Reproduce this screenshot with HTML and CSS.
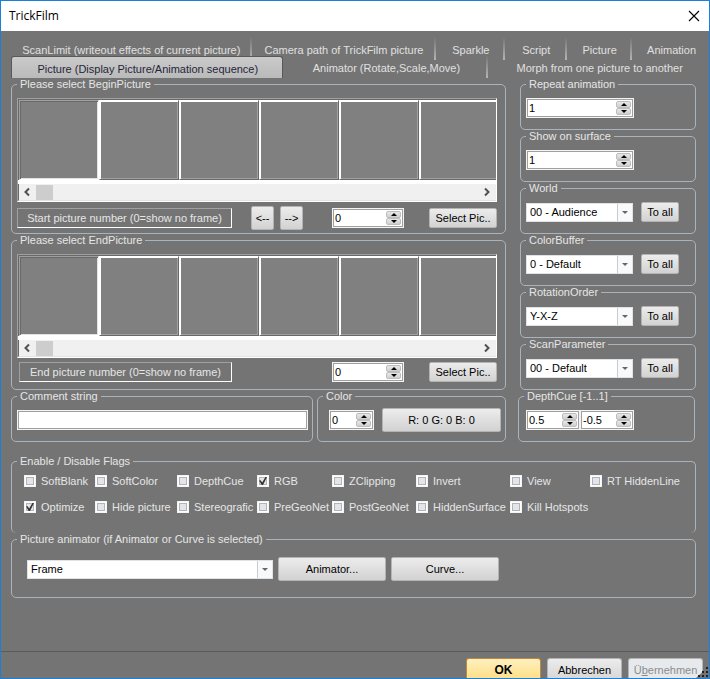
FILE: index.html
```html
<!DOCTYPE html>
<html lang="en">
<head>
    <meta charset="UTF-8">
    <meta name="viewport" content="width=device-width, initial-scale=1.0">
    <title>TrickFilm</title>
    <link rel="stylesheet" href="styles.css">
</head>
<body>
    <div class="window">
        <header class="titlebar">
            <h1>TrickFilm</h1>
            <button class="close" type="button" aria-label="Close">
                <svg width="12" height="12" viewBox="0 0 12 12"><path d="M1 1L11 11M11 1L1 11" stroke="#000" stroke-width="1.1" fill="none"/></svg>
            </button>
        </header>

        <nav class="tabs">
            <div class="tab-row tab-row-back">
                <button class="tab" type="button">ScanLimit (writeout effects of current picture)</button>
                <button class="tab" type="button">Camera path of TrickFilm picture</button>
                <button class="tab" type="button">Sparkle</button>
                <button class="tab" type="button">Script</button>
                <button class="tab" type="button">Picture</button>
                <button class="tab" type="button">Animation</button>
            </div>
            <div class="tab-row tab-row-front">
                <button class="tab active" type="button">Picture (Display Picture/Animation sequence)</button>
                <button class="tab" type="button">Animator (Rotate,Scale,Move)</button>
                <button class="tab" type="button">Morph from one picture to another</button>
            </div>
        </nav>

        <main class="content">
            <div class="columns">
                <div class="left">
                    <fieldset class="picture-group">
                        <legend>Please select BeginPicture</legend>
                        <div class="film">
                            <div class="frames">
                                <div class="frame selected"></div>
                                <div class="frame"></div>
                                <div class="frame"></div>
                                <div class="frame"></div>
                                <div class="frame"></div>
                                <div class="frame"></div>
                            </div>
                            <div class="scrollbar">
                                <svg width="8" height="10" viewBox="0 0 8 10"><path d="M6 1.5L2.5 5L6 8.5" stroke="#505050" stroke-width="2" fill="none"/></svg>
                                <div class="thumb"></div>
                                <svg width="8" height="10" viewBox="0 0 8 10"><path d="M2 1.5L5.5 5L2 8.5" stroke="#505050" stroke-width="2" fill="none"/></svg>
                            </div>
                        </div>
                        <div class="picture-row">
                            <label class="number-label" for="startNumber">Start picture number (0=show no frame)</label>
                            <div class="step-buttons">
                                <button class="btn arrow" type="button">&lt;--</button>
                                <button class="btn arrow" type="button">--&gt;</button>
                            </div>
                            <div class="spin spin-picture">
                                <input id="startNumber" type="text" value="0">
                                <div class="spin-buttons"><button type="button" class="up" aria-label="Up"></button><button type="button" class="down" aria-label="Down"></button></div>
                            </div>
                            <button class="btn select-pic" type="button">Select Pic..</button>
                        </div>
                    </fieldset>

                    <fieldset class="picture-group end">
                        <legend>Please select EndPicture</legend>
                        <div class="film">
                            <div class="frames">
                                <div class="frame selected"></div>
                                <div class="frame"></div>
                                <div class="frame"></div>
                                <div class="frame"></div>
                                <div class="frame"></div>
                                <div class="frame"></div>
                            </div>
                            <div class="scrollbar">
                                <svg width="8" height="10" viewBox="0 0 8 10"><path d="M6 1.5L2.5 5L6 8.5" stroke="#505050" stroke-width="2" fill="none"/></svg>
                                <div class="thumb"></div>
                                <svg width="8" height="10" viewBox="0 0 8 10"><path d="M2 1.5L5.5 5L2 8.5" stroke="#505050" stroke-width="2" fill="none"/></svg>
                            </div>
                        </div>
                        <div class="picture-row">
                            <label class="number-label" for="endNumber">End picture number (0=show no frame)</label>
                            <div class="step-buttons"></div>
                            <div class="spin spin-picture">
                                <input id="endNumber" type="text" value="0">
                                <div class="spin-buttons"><button type="button" class="up" aria-label="Up"></button><button type="button" class="down" aria-label="Down"></button></div>
                            </div>
                            <button class="btn select-pic" type="button">Select Pic..</button>
                        </div>
                    </fieldset>

                    <div class="comment-row">
                        <fieldset class="comment-group">
                            <legend>Comment string</legend>
                            <input class="textbox" type="text" aria-label="Comment string">
                        </fieldset>
                        <fieldset class="color-group">
                            <legend>Color</legend>
                            <div class="row">
                                <div class="spin spin-color">
                                    <input type="text" value="0" aria-label="Color">
                                    <div class="spin-buttons"><button type="button" class="up" aria-label="Up"></button><button type="button" class="down" aria-label="Down"></button></div>
                                </div>
                                <button class="btn rgb" type="button">R: 0 G: 0 B: 0</button>
                            </div>
                        </fieldset>
                    </div>
                </div>

                <div class="right">
                    <fieldset>
                        <legend>Repeat animation</legend>
                        <div class="spin spin-wide">
                            <input type="text" value="1" aria-label="Repeat animation">
                            <div class="spin-buttons"><button type="button" class="up" aria-label="Up"></button><button type="button" class="down" aria-label="Down"></button></div>
                        </div>
                    </fieldset>
                    <fieldset>
                        <legend>Show on surface</legend>
                        <div class="spin spin-wide">
                            <input type="text" value="1" aria-label="Show on surface">
                            <div class="spin-buttons"><button type="button" class="up" aria-label="Up"></button><button type="button" class="down" aria-label="Down"></button></div>
                        </div>
                    </fieldset>
                    <fieldset>
                        <legend>World</legend>
                        <div class="row">
                            <div class="combo"><select aria-label="World"><option>00 - Audience</option></select></div>
                            <button class="btn to-all" type="button">To all</button>
                        </div>
                    </fieldset>
                    <fieldset>
                        <legend>ColorBuffer</legend>
                        <div class="row">
                            <div class="combo"><select aria-label="ColorBuffer"><option>0 - Default</option></select></div>
                            <button class="btn to-all" type="button">To all</button>
                        </div>
                    </fieldset>
                    <fieldset>
                        <legend>RotationOrder</legend>
                        <div class="row">
                            <div class="combo"><select aria-label="RotationOrder"><option>Y-X-Z</option></select></div>
                            <button class="btn to-all" type="button">To all</button>
                        </div>
                    </fieldset>
                    <fieldset>
                        <legend>ScanParameter</legend>
                        <div class="row">
                            <div class="combo"><select aria-label="ScanParameter"><option>00 - Default</option></select></div>
                            <button class="btn to-all" type="button">To all</button>
                        </div>
                    </fieldset>
                    <fieldset class="depth-group">
                        <legend>DepthCue [-1..1]</legend>
                        <div class="row depth">
                            <div class="spin spin-small">
                                <input type="text" value="0.5" aria-label="DepthCue from">
                                <div class="spin-buttons"><button type="button" class="up" aria-label="Up"></button><button type="button" class="down" aria-label="Down"></button></div>
                            </div>
                            <div class="spin spin-small">
                                <input type="text" value="-0.5" aria-label="DepthCue to">
                                <div class="spin-buttons"><button type="button" class="up" aria-label="Up"></button><button type="button" class="down" aria-label="Down"></button></div>
                            </div>
                        </div>
                    </fieldset>
                </div>
            </div>

            <fieldset class="flags-group">
                <legend>Enable / Disable Flags</legend>
                <div class="flags">
                    <label><input type="checkbox">SoftBlank</label>
                    <label><input type="checkbox">SoftColor</label>
                    <label><input type="checkbox">DepthCue</label>
                    <label><input type="checkbox" checked>RGB</label>
                    <label><input type="checkbox">ZClipping</label>
                    <label><input type="checkbox">Invert</label>
                    <label><input type="checkbox">View</label>
                    <label><input type="checkbox">RT HiddenLine</label>
                    <label><input type="checkbox" checked>Optimize</label>
                    <label><input type="checkbox">Hide picture</label>
                    <label><input type="checkbox">Stereografic</label>
                    <label><input type="checkbox">PreGeoNet</label>
                    <label><input type="checkbox">PostGeoNet</label>
                    <label><input type="checkbox">HiddenSurface</label>
                    <label><input type="checkbox">Kill Hotspots</label>
                </div>
            </fieldset>

            <fieldset class="animator-group">
                <legend>Picture animator (if Animator or Curve is selected)</legend>
                <div class="animator-row">
                    <div class="combo"><select aria-label="Picture animator"><option>Frame</option></select></div>
                    <button class="btn" type="button">Animator...</button>
                    <button class="btn" type="button">Curve...</button>
                </div>
            </fieldset>
        </main>

        <footer class="footer">
            <button class="dialog-btn ok" type="button">OK</button>
            <button class="dialog-btn" type="button">Abbrechen</button>
            <button class="dialog-btn" type="button" disabled>Ü<u>b</u>ernehmen</button>
            <svg class="grip" width="14" height="12" viewBox="0 0 14 12">
                <path d="M14 0V12H1Z" fill="#747474"/>
                <path d="M11 1h2v2h-2zM7 5h2v2h-2zM11 5h2v2h-2zM3 9h2v2h-2zM7 9h2v2h-2zM11 9h2v2h-2z" fill="#222"/>
            </svg>
        </footer>
    </div>
</body>
</html>
```
FILE: styles.css
```css
* {
    box-sizing: border-box;
}

body {
    margin: 0;
    background-color: #747474;
    font-family: "Liberation Sans", Arial, sans-serif;
    font-size: 11px;
    line-height: 12px;
    color: #e6e6e6;
}

button,
input,
select {
    margin: 0;
    font: inherit;
    color: #000;
}

.window {
    display: flex;
    flex-direction: column;
    min-height: 100vh;
    border: 1px solid #1a80d8;
}

/* title bar */
.titlebar {
    display: flex;
    justify-content: space-between;
    align-items: center;
    height: 30px;
    padding: 0 9px 0 8px;
    background-color: #fff;
}

.titlebar h1 {
    margin: 0;
    font-family: "Open Sans", sans-serif;
    font-size: 12px;
    font-weight: normal;
    color: #000;
}

.close {
    display: flex;
    padding: 0;
    border: none;
    background: none;
}

/* tabs */
.tabs {
    padding: 7px 0 0 10px;
}

.tab-row {
    display: grid;
}

.tab-row-back {
    height: 18px;
    grid-template-columns: 241fr 185fr 69fr 62fr 65fr 77fr;
}

.tab-row-front {
    height: 22px;
    grid-template-columns: 274fr 204fr 221fr;
}

.tab {
    padding: 2px 0 0 2px;
    border: none;
    border-right: 2px solid;
    border-image: linear-gradient(#747474, #b8b8b8) 1;
    background: none;
    color: #e0e0e0;
    white-space: nowrap;
}

.tab-row-back .tab {
    height: 22px;
}

.tab:last-child {
    border-right: none;
}

.tab.active {
    position: relative;
    margin-right: 2px;
    border: 1px solid #585858;
    border-bottom: none;
    border-image: none;
    border-radius: 3px 3px 0 0;
    background: linear-gradient(#cacaca, #bababa);
    color: #26263a;
}

/* group boxes */
fieldset {
    min-width: 0;
    margin: 0;
    padding: 8px 5px 11px;
    border: 1px solid #a9b3bb;
    border-radius: 5px;
}

legend {
    height: 12px;
    padding: 0 3px;
}

.content {
    padding: 0 13px 0 10px;
}

.columns {
    display: grid;
    grid-template-columns: 495fr 176fr;
    column-gap: 14px;
}

.left,
.right {
    min-width: 0;
}

.row {
    display: flex;
    align-items: center;
    gap: 8px;
    height: 20px;
}

.picture-group {
    padding: 8px 8px 3px 5px;
}

.picture-group.end {
    padding-bottom: 5px;
}

/* film strip */
.film {
    height: 104px;
    border: 1px solid;
    border-color: #a0a0a0 #fff #fff #a0a0a0;
    background-color: #fff;
}

.frames {
    display: flex;
    height: 81px;
    overflow: hidden;
    border-top: 1px solid #696969;
    border-left: 1px solid #696969;
    background-color: #fff;
}

.frame {
    flex: none;
    width: 80px;
    height: 80px;
    border: 1px solid;
    border-color: #fff #696969 #696969 #fff;
    background-color: #808080;
    box-shadow: inset 1px 1px #fff, inset -1px -1px #a0a0a0;
}

.frame.selected {
    border-color: #a0a0a0 #fff #fff #a0a0a0;
    box-shadow: inset 1px 1px #696969, inset -1px -1px #e3e3e3;
}

.scrollbar {
    display: flex;
    align-items: center;
    height: 17px;
    margin-top: 4px;
    padding: 0 5px 0 4px;
    border-bottom: 1px solid #e3e3e3;
    border-left: 1px solid #696969;
    background-color: #f0f0f0;
}

.thumb {
    width: 17px;
    height: 15px;
    margin-left: 5px;
    margin-right: auto;
    background-color: #cdcdcd;
}

.picture-row {
    display: flex;
    align-items: center;
    height: 24px;
    margin-top: 4px;
}

.end .picture-row {
    margin-top: 2px;
}

.number-label {
    width: 215px;
    height: 20px;
    border: 1px solid;
    border-color: #a0a0a0 #fff #fff #a0a0a0;
    line-height: 18px;
    text-align: center;
}

.end .number-label {
    width: 213px;
    margin-left: 2px;
}

.step-buttons {
    display: flex;
    gap: 6px;
    width: 52px;
    margin: 0 29px 0 19px;
}

.select-pic {
    width: 68px;
    margin-left: auto;
}

/* buttons */
.btn {
    height: 20px;
    padding: 0;
    border: 1px solid #b4b4b4;
    border-radius: 2px;
    background: linear-gradient(#ececec, #d2d2d2);
    white-space: nowrap;
}

.btn.arrow {
    width: 23px;
    height: 24px;
}

.btn.to-all {
    width: 38px;
}

.btn.rgb {
    flex: 1;
    height: 24px;
}

/* number boxes */
.spin {
    display: flex;
    align-items: center;
    height: 20px;
    padding: 0 2px 0 1px;
    border: 1px solid #f4f4f4;
    background-color: #fff;
    box-shadow: inset 0 0 0 1px #a0a0a0;
}

.spin input {
    flex: 1;
    min-width: 0;
    padding: 0 0 0 1px;
    border: none;
    background: none;
    outline: none;
}

.spin-buttons {
    display: flex;
    flex-direction: column;
    width: 15px;
}

.spin-buttons button {
    display: flex;
    justify-content: center;
    align-items: center;
    height: 7px;
    padding: 0;
    border: 1px solid #bdbdbd;
    border-radius: 2px;
    background: linear-gradient(#e8e8e8, #cfcfcf);
}

.spin-buttons button::before {
    content: "";
    border: 3px solid transparent;
}

.spin-buttons .up::before {
    border-top: none;
    border-bottom-color: #000;
}

.spin-buttons .down::before {
    border-bottom: none;
    border-top-color: #000;
}

.spin-picture {
    width: 72px;
}

.spin-wide {
    width: 108px;
}

.spin-small {
    width: 54px;
}

.spin-color {
    width: 45px;
}

.depth-group {
    margin: 0 1px 0 -2px;
    padding-left: 7px;
}

.depth-group legend {
    margin-left: -2px;
}

.depth {
    gap: 0;
}

/* drop-downs */
.combo {
    position: relative;
    width: 107px;
}

.combo select {
    appearance: none;
    display: block;
    width: 100%;
    height: 19px;
    padding: 0 16px 0 3px;
    border: 1px solid #dfe3e6;
    border-radius: 0;
    background: #fff;
}

.combo::before {
    content: "";
    position: absolute;
    top: 1px;
    right: 1px;
    bottom: 1px;
    width: 14px;
    border-left: 1px solid #c8cdd2;
    background-color: #f8f9fa;
    pointer-events: none;
}

.combo::after {
    content: "";
    position: absolute;
    top: 8px;
    right: 5px;
    border: 3px solid transparent;
    border-top-color: #666;
    border-bottom: none;
    pointer-events: none;
}

/* comment and color */
.comment-row {
    display: grid;
    grid-template-columns: 302fr 189fr;
    column-gap: 4px;
}

.textbox {
    display: block;
    width: 100%;
    height: 20px;
    padding: 0 3px;
    border: 1px solid #f4f4f4;
    background-color: #fff;
    box-shadow: inset 0 0 0 1px #a0a0a0;
}

.comment-group {
    padding-right: 4px;
}

.color-group {
    padding-left: 11px;
    padding-right: 4px;
}

.color-group legend {
    margin-left: -6px;
}

/* flags */
.flags-group {
    margin-top: 13px;
    padding: 7px 0 19px 12px;
    border-bottom: none;
}

.flags-group legend {
    margin-left: -7px;
}

.flags {
    display: grid;
    grid-template-columns: 71fr 82fr 80fr 75fr 84fr 94fr 80fr 105fr;
    row-gap: 12px;
}

.flags label {
    display: flex;
    align-items: center;
    gap: 5px;
    height: 14px;
    white-space: nowrap;
}

.flags input {
    appearance: none;
    display: grid;
    flex: none;
    width: 12px;
    height: 12px;
    border: 1px solid #f4f4f4;
    background-color: #e4e5e8;
    box-shadow: inset 0 0 0 1px #fff, inset 0 0 0 2px #b0b4b8;
}

.flags input:checked::before {
    content: "";
    place-self: center;
    width: 8px;
    height: 8px;
    background-color: #333;
    clip-path: polygon(0 45%, 20% 40%, 40% 68%, 80% 0, 100% 0, 50% 100%, 34% 100%);
}

/* picture animator */
.animator-group {
    padding: 12px 15px 16px;
}

.animator-group legend {
    margin-left: -10px;
}

.animator-row {
    display: flex;
    align-items: center;
    gap: 5px;
    height: 24px;
}

.animator-row .combo {
    width: 246px;
}

.animator-row .btn {
    width: 108px;
    height: 24px;
}

/* footer */
.footer {
    position: relative;
    display: flex;
    justify-content: flex-end;
    gap: 6px;
    margin-top: auto;
    padding: 6px 6px 0 0;
    border-top: 1px solid #5a5a5a;
}

.dialog-btn {
    width: 75px;
    height: 20px;
    padding: 3px 0 0;
    border: 1px solid #b4b4b4;
    border-bottom: none;
    border-radius: 3px 3px 0 0;
    background: linear-gradient(#ececec, #d8d8d8);
}

.dialog-btn.ok {
    border-color: #c08a3c;
    background: linear-gradient(#fff0c0, #ffe08a);
    font-size: 12px;
    font-weight: bold;
}

.dialog-btn:disabled {
    background: #e6eaed;
    color: #8c8c8c;
}

.grip {
    position: absolute;
    right: 0;
    bottom: 0;
}
```
